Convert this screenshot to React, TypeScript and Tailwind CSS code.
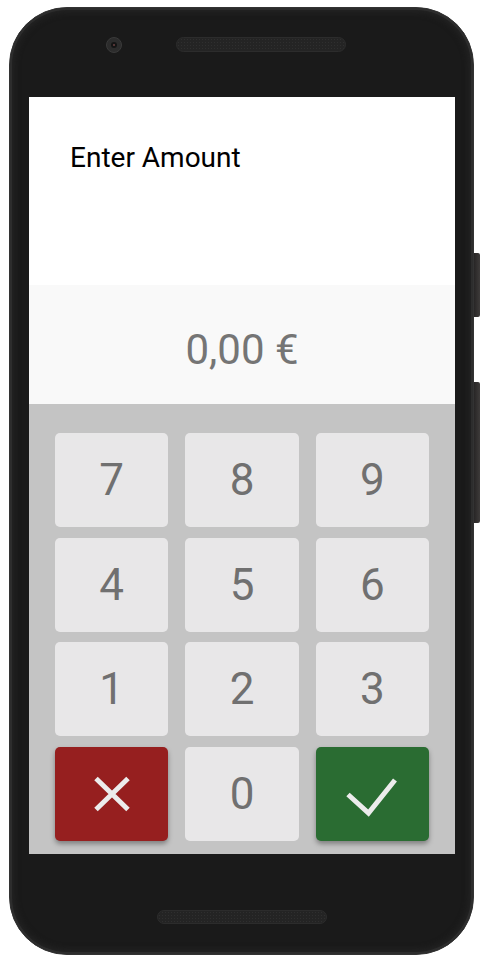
import React from 'react'

const digits = ['7', '8', '9', '4', '5', '6', '1', '2', '3']

const Key = ({ label }: { label: string }) => (
  <button className="h-[94px] rounded-[5px] bg-[#e8e7e8] flex items-center justify-center text-[44px] leading-none text-[#707070]">
    {label}
  </button>
)

const App = () => {
  return (
    <div
      className="w-[488px] h-[964px] bg-white flex pl-[9px] pt-[7px]"
      style={{ fontFamily: 'Roboto, "Noto Sans", sans-serif' }}
    >
      {/* phone body */}
      <div className="w-[465px] h-[948px] rounded-[58px] bg-[#1a1a1a] border border-[#333333] shadow-[inset_0_0_0_2px_#2d2d2d,inset_0_0_6px_4px_#242424] flex flex-col px-[19px]">
        {/* top bezel */}
        <div className="flex items-center h-[15px] mt-[29px] mb-[45px]">
          <div className="w-4 h-4 ml-[77px] rounded-full bg-[#2c2c2c] border border-[#3a3a3a] flex items-center justify-center">
            <div className="w-[6px] h-[6px] rounded-full bg-[#141414] flex items-center justify-center">
              <div className="w-[2px] h-[2px] rounded-full bg-[#6a4040]" />
            </div>
          </div>
          <div className="w-[170px] h-[15px] ml-[54px] rounded-full bg-[#242424] border border-[#2c2c2c] bg-[radial-gradient(circle,#2f2f2f_0.8px,transparent_1px)] bg-[length:3px_3px]" />
        </div>

        {/* screen */}
        <div className="w-[426px] h-[757px] flex flex-col">
          <div className="h-[188px] bg-white pt-[47px] pl-[41px]">
            <p className="text-[28px] leading-[28px] text-black">Enter Amount</p>
          </div>
          <div className="h-[119px] bg-[#f9f9f9] pt-[44px] text-center">
            <p className="text-[42px] leading-[42px] text-[#757575]">0,00 €</p>
          </div>
          <div className="flex-1 bg-[#c4c4c4] px-[26px] pt-[29px] grid grid-cols-3 gap-x-[17px] gap-y-[10.5px] content-start">
            {digits.map((d) => (
              <Key key={d} label={d} />
            ))}
            <button className="h-[94px] rounded-[5px] bg-[#961f1f] shadow-[0_3px_5px_rgba(0,0,0,0.35)] flex items-center justify-center">
              <svg width="40" height="40" viewBox="0 0 40 40">
                <path d="M4 4.5L36 35.5M36 4.5L4 35.5" stroke="#ececec" strokeWidth="5" />
              </svg>
            </button>
            <Key label="0" />
            <button className="h-[94px] rounded-[5px] bg-[#2a6c32] shadow-[0_3px_5px_rgba(0,0,0,0.35)] flex items-center justify-center">
              <svg width="60" height="50" viewBox="0 0 60 50">
                <path d="M6 25.5L26.5 44L53 11" stroke="#ececec" strokeWidth="5" fill="none" />
              </svg>
            </button>
          </div>
        </div>

        {/* bottom bezel */}
        <div className="w-[170px] h-[14px] mt-[56px] self-center rounded-full bg-[#242424] border border-[#2c2c2c] bg-[radial-gradient(circle,#2f2f2f_0.8px,transparent_1px)] bg-[length:3px_3px]" />
      </div>

      {/* side buttons */}
      <div className="flex flex-col w-[6px]">
        <div className="h-[64px] mt-[246px] rounded-r-[2px] bg-gradient-to-r from-[#282626] to-[#3e3b3a]" />
        <div className="h-[141px] mt-[65px] rounded-r-[2px] bg-gradient-to-r from-[#282626] to-[#3e3b3a]" />
      </div>
    </div>
  )
}

export default App
